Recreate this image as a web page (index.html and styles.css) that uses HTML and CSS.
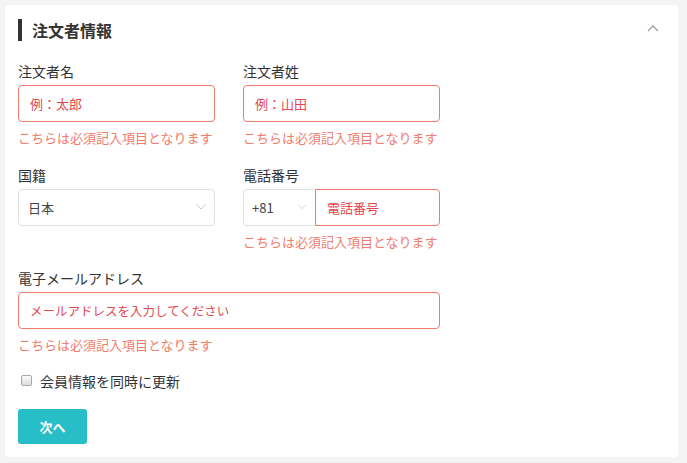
FILE: index.html
```html
<!DOCTYPE html>
<html lang="ja">
<head>
<meta charset="utf-8">
<title>注文者情報</title>
<link rel="stylesheet" href="styles.css">
</head>
<body>
<div class="card">
  <div class="header">
    <h2 class="title">注文者情報</h2>
    <svg class="collapse" width="12" height="7" viewBox="0 0 12 7"><polyline points="1,6 6,1 11,6" fill="none" stroke="#9aa0a8" stroke-width="1.3"/></svg>
  </div>
  <div class="grid">
    <div class="field">
      <div class="label">注文者名</div>
      <input class="input invalid" type="text" placeholder="例：太郎">
      <div class="error">こちらは必須記入項目となります</div>
    </div>
    <div class="field">
      <div class="label">注文者姓</div>
      <input class="input invalid" type="text" placeholder="例：山田">
      <div class="error">こちらは必須記入項目となります</div>
    </div>
    <div class="field">
      <div class="label">国籍</div>
      <div class="select">
        <span class="select-text">日本</span>
        <svg class="chev" width="10" height="6" viewBox="0 0 10 6"><polyline points="0.5,0.5 5,5 9.5,0.5" fill="none" stroke="#c8c8c8" stroke-width="1"/></svg>
      </div>
    </div>
    <div class="field">
      <div class="label">電話番号</div>
      <div class="phone">
        <div class="select code">
          <span class="select-text">+81</span>
          <svg class="chev" width="10" height="6" viewBox="0 0 10 6"><polyline points="0.5,0.5 5,5 9.5,0.5" fill="none" stroke="#c8c8c8" stroke-width="1"/></svg>
        </div>
        <input class="input invalid tel" type="text" placeholder="電話番号">
      </div>
      <div class="error">こちらは必須記入項目となります</div>
    </div>
    <div class="field full">
      <div class="label">電子メールアドレス</div>
      <input class="input invalid email" type="text" placeholder="メールアドレスを入力してください">
      <div class="error">こちらは必須記入項目となります</div>
    </div>
  </div>
  <label class="check-row">
    <input class="check" type="checkbox">
    <span>会員情報を同時に更新</span>
  </label>
  <button class="next" type="button">次へ</button>
</div>
</body>
</html>
```

FILE: styles.css
```css
* { box-sizing: border-box; }
html, body { margin: 0; padding: 0; }
body {
  background: #f4f4f4;
  padding: 5px 9px 6px 5px;
  font-family: "Noto Sans CJK JP", "Noto Sans", sans-serif;
  color: #333;
}
.card {
  width: 673px;
  background: #fff;
  border-radius: 4px;
  padding: 14px 13px 13px 13px;
}
.header {
  display: flex;
  align-items: center;
  justify-content: space-between;
  height: 22px;
}
.title {
  margin: 0;
  border-left: 4px solid #333;
  padding-left: 10px;
  height: 22px;
  font-size: 16px;
  line-height: 22px;
  font-weight: 700;
  color: #333;
}
.collapse { margin-right: 6px; margin-top: -4px; }
.grid {
  margin-top: 20px;
  display: grid;
  grid-template-columns: 197px 197px;
  column-gap: 28px;
  row-gap: 17.5px;
  align-items: start;
}
.field { min-width: 0; }
.full { grid-column: 1 / 3; }
.label {
  font-size: 14px;
  line-height: 20px;
  color: #333;
  margin-bottom: 4px;
}
.input {
  display: block;
  width: 100%;
  min-width: 0;
  height: 37px;
  margin: 0;
  border: 1px solid #ddd;
  border-radius: 4px;
  padding: 0 11px;
  font-family: inherit;
  font-size: 13px;
  outline: none;
  background: #fff;
}
.input.email { font-size: 12.5px; }
.input.invalid { border-color: #ef7b6e; }
.input::placeholder { color: #e5474f; opacity: 1; }
.error {
  margin-top: 7px;
  font-size: 13px;
  line-height: 18px;
  color: #f17c6e;
}
.select {
  display: flex;
  align-items: center;
  justify-content: space-between;
  height: 37px;
  border: 1px solid #e0e0e0;
  border-radius: 4px;
  padding: 0 8px 0 9px;
  font-size: 13px;
  color: #444;
  background: #fff;
}
.phone { display: flex; width: 100%; }
.select.code {
  width: 72px;
  flex: none;
  border-right: none;
  border-radius: 4px 0 0 4px;
  padding: 0 9px 0 8px;
}
.select.code .chev { width: 8px; }
.input.tel {
  flex: 1 1 0;
  width: 0;
  border-radius: 0 4px 4px 0;
}
.check-row {
  display: flex;
  align-items: center;
  margin-top: 16.5px;
  height: 20px;
  font-size: 14px;
  color: #333;
}
.check {
  -webkit-appearance: none;
  appearance: none;
  width: 11px;
  height: 11px;
  margin: 0 8px 0 3px;
  border: 1px solid #a8a8a8;
  border-radius: 2px;
  background: linear-gradient(#fbfbfb, #dcdcdc);
}
.next {
  display: block;
  margin-top: 18.5px;
  width: 69px;
  height: 35px;
  border: none;
  border-radius: 3px;
  background: #27bec8;
  color: #fff;
  font-family: inherit;
  font-size: 13px;
  font-weight: 700;
  padding: 0;
}
```
